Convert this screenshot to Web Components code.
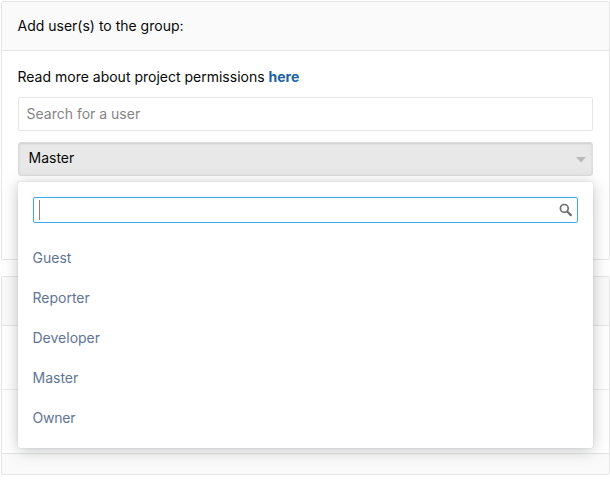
<!DOCTYPE html>
<html lang="en">
<head>
<meta charset="utf-8">
<title>Group members</title>
<style>
html,body{margin:0;height:482px;overflow:hidden;background:#fff}
body{font:14px/20px Inter,Roboto,sans-serif;color:#080808}
</style>
</head>
<body>
<members-page></members-page>
<script>
const define = (name, html) => customElements.define(name, class extends HTMLElement {
  constructor() {
    super();
    this.attachShadow({mode: 'open'}).innerHTML = html;
  }
});

define('ui-panel', `
<style>
:host{display:flex;flex-direction:column;box-sizing:border-box;border:1px solid #e5e5e5;border-radius:2px;background:#fff;overflow:hidden}
header{box-sizing:border-box;height:49px;flex:none;padding:14px 15.5px 0;background:#fafafa;border-bottom:1px solid #e5e5e5}
</style>
<header><slot name="title"></slot></header><slot></slot>`);

define('text-field', `
<style>
:host{display:block;box-sizing:border-box;height:34px;border:1px solid #e5e5e5;border-radius:2px;padding:6px 7.5px;color:#858585}
</style>
<slot></slot>`);

define('role-option', `
<style>
:host{display:block;height:40px;line-height:40px;color:#5f7594}
:host(:last-of-type){letter-spacing:-.2px}
</style>
<slot></slot>`);

define('search-box', `
<style>
:host{display:flex;box-sizing:border-box;height:26px;border:1px solid #3aabf0;border-radius:2px;background:#fff;justify-content:space-between;padding:2px 5px}
i{width:1px;height:20px;background:#7f8599}
svg{display:block;margin-top:3px}
</style>
<i></i>
<svg width="13" height="14" viewBox="0 0 13 14" fill="none" stroke="#707070"><circle cx="5.3" cy="5.4" r="3.9" stroke-width="1.7"/><path d="M8.2 8.5L11.8 12.1" stroke-width="2.2" stroke-linecap="round"/></svg>`);

define('role-select', `
<style>
:host{display:block;position:relative}
.current{display:flex;justify-content:space-between;box-sizing:border-box;height:34px;padding:5px 6px 6px 9.5px;border:1px solid #dcdcdc;border-radius:3px;background:#e8e8e8;box-shadow:inset 0 1px 2px rgba(0,0,0,.12)}
.current svg{margin-top:9px}
.menu{position:absolute;left:0;top:40px;width:100%;height:266px;box-sizing:border-box;background:#fff;border-radius:2px;padding:15px 15px 0;box-shadow:0 0 1px rgba(60,64,80,.3),0 2px 15px rgba(76,78,84,.34);z-index:2}
.options{padding-top:15px;margin-left:-.5px}
</style>
<div class="current"><slot name="value"></slot><svg width="10" height="6"><path d="M0 0H10L5 5.5Z" fill="#b9b9b9"/></svg></div>
<div class="menu"><search-box></search-box><div class="options"><slot></slot></div></div>`);

define('members-page', `
<style>
:host{display:flex;flex-direction:column;gap:16px;padding:1px 0 0 1px;width:609px;box-sizing:content-box}
.add{height:259px;overflow:visible}
.body{display:flex;flex-direction:column;padding:16px 16px 0}
p{margin:0 0 10px -.5px}
a{color:#1b61a5;font-weight:700;text-decoration:none}
text-field{margin-bottom:11px}
.list{height:199px}
.row{height:63px;flex:none;border-bottom:1px solid #ededed}
.row + .row{border-color:#e2e2e2}
.foot{flex:1;background:#fafafa}
</style>
<ui-panel class="add">
  <span slot="title">Add user(s) to the group:</span>
  <div class="body">
    <p>Read more about project permissions <a>here</a></p>
    <text-field>Search for a user</text-field>
    <role-select><span slot="value">Master</span>
      <role-option>Guest</role-option><role-option>Reporter</role-option><role-option>Developer</role-option><role-option>Master</role-option><role-option>Owner</role-option>
    </role-select>
  </div>
</ui-panel>
<ui-panel class="list"><div class="row"></div><div class="row"></div><div class="foot"></div></ui-panel>`);
</script>
</body>
</html>
